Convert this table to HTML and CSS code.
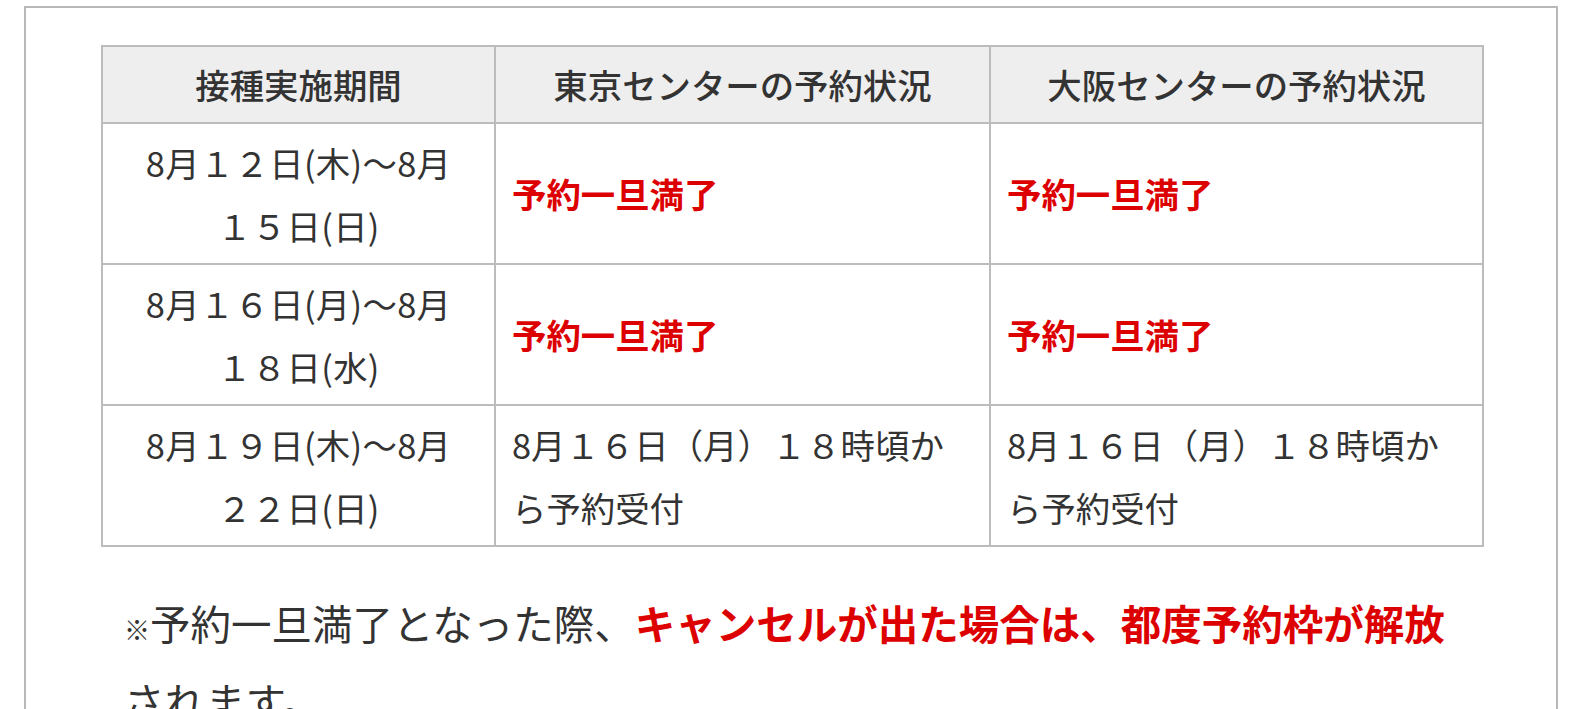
FILE: index.html
```html
<!DOCTYPE html>
<html lang="ja">
<head>
<meta charset="utf-8">
<title>予約状況</title>
<link rel="stylesheet" href="styles.css">
</head>
<body>
<div class="box">
  <table class="status">
    <colgroup>
      <col class="c1">
      <col class="c2">
      <col class="c3">
    </colgroup>
    <thead>
      <tr>
        <th>接種実施期間</th>
        <th>東京センターの予約状況</th>
        <th>大阪センターの予約状況</th>
      </tr>
    </thead>
    <tbody>
      <tr>
        <td class="period">8月１２日(木)～8月<br>１５日(日)</td>
        <td class="full">予約一旦満了</td>
        <td class="full">予約一旦満了</td>
      </tr>
      <tr>
        <td class="period">8月１６日(月)～8月<br>１８日(水)</td>
        <td class="full">予約一旦満了</td>
        <td class="full">予約一旦満了</td>
      </tr>
      <tr>
        <td class="period">8月１９日(木)～8月<br>２２日(日)</td>
        <td>8月１６日（月）１８時頃から予約受付</td>
        <td>8月１６日（月）１８時頃から予約受付</td>
      </tr>
    </tbody>
  </table>
  <p class="note"><span class="mark">※</span>予約一旦満了となった際、<span class="red">キャンセルが出た場合は、都度予約枠が解放</span>されます。</p>
</div>
</body>
</html>
```
FILE: styles.css
```css
html, body {
  margin: 0;
  padding: 0;
  background: #fff;
}
body {
  font-family: "Noto Sans CJK JP", "Noto Sans", sans-serif;
  color: #333;
}
.box {
  margin: 6px 0 0 24px;
  box-sizing: content-box;
  width: 1381px;
  border: 2px solid #b9b9b9;
  border-bottom: none;
  padding: 37px 74px 40px 75px;
}
.status {
  width: 1381px;
  border-collapse: collapse;
  table-layout: fixed;
  font-size: 34.4px;
  line-height: 63px;
}
.c1 { width: 393px; }
.c2 { width: 495px; }
.c3 { width: 493px; }
.status th,
.status td {
  border: 2px solid #bcbcbc;
  padding: 6.5px 16px;
  vertical-align: middle;
  text-align: left;
}
.status th {
  background: #eeeeee;
  font-weight: 500;
  text-align: center;
  padding: 6px 16px;
}
.status td.period {
  text-align: center;
  letter-spacing: 0.3px;
}
.status td.full {
  color: #dd0000;
  font-weight: bold;
}
.note {
  margin: 40px 0 0;
  padding: 0 20px 0 23px;
  font-size: 40.5px;
  line-height: 72px;
}
.mark {
  font-size: 26px;
}
.red {
  color: #dd0000;
  font-weight: bold;
}
```
